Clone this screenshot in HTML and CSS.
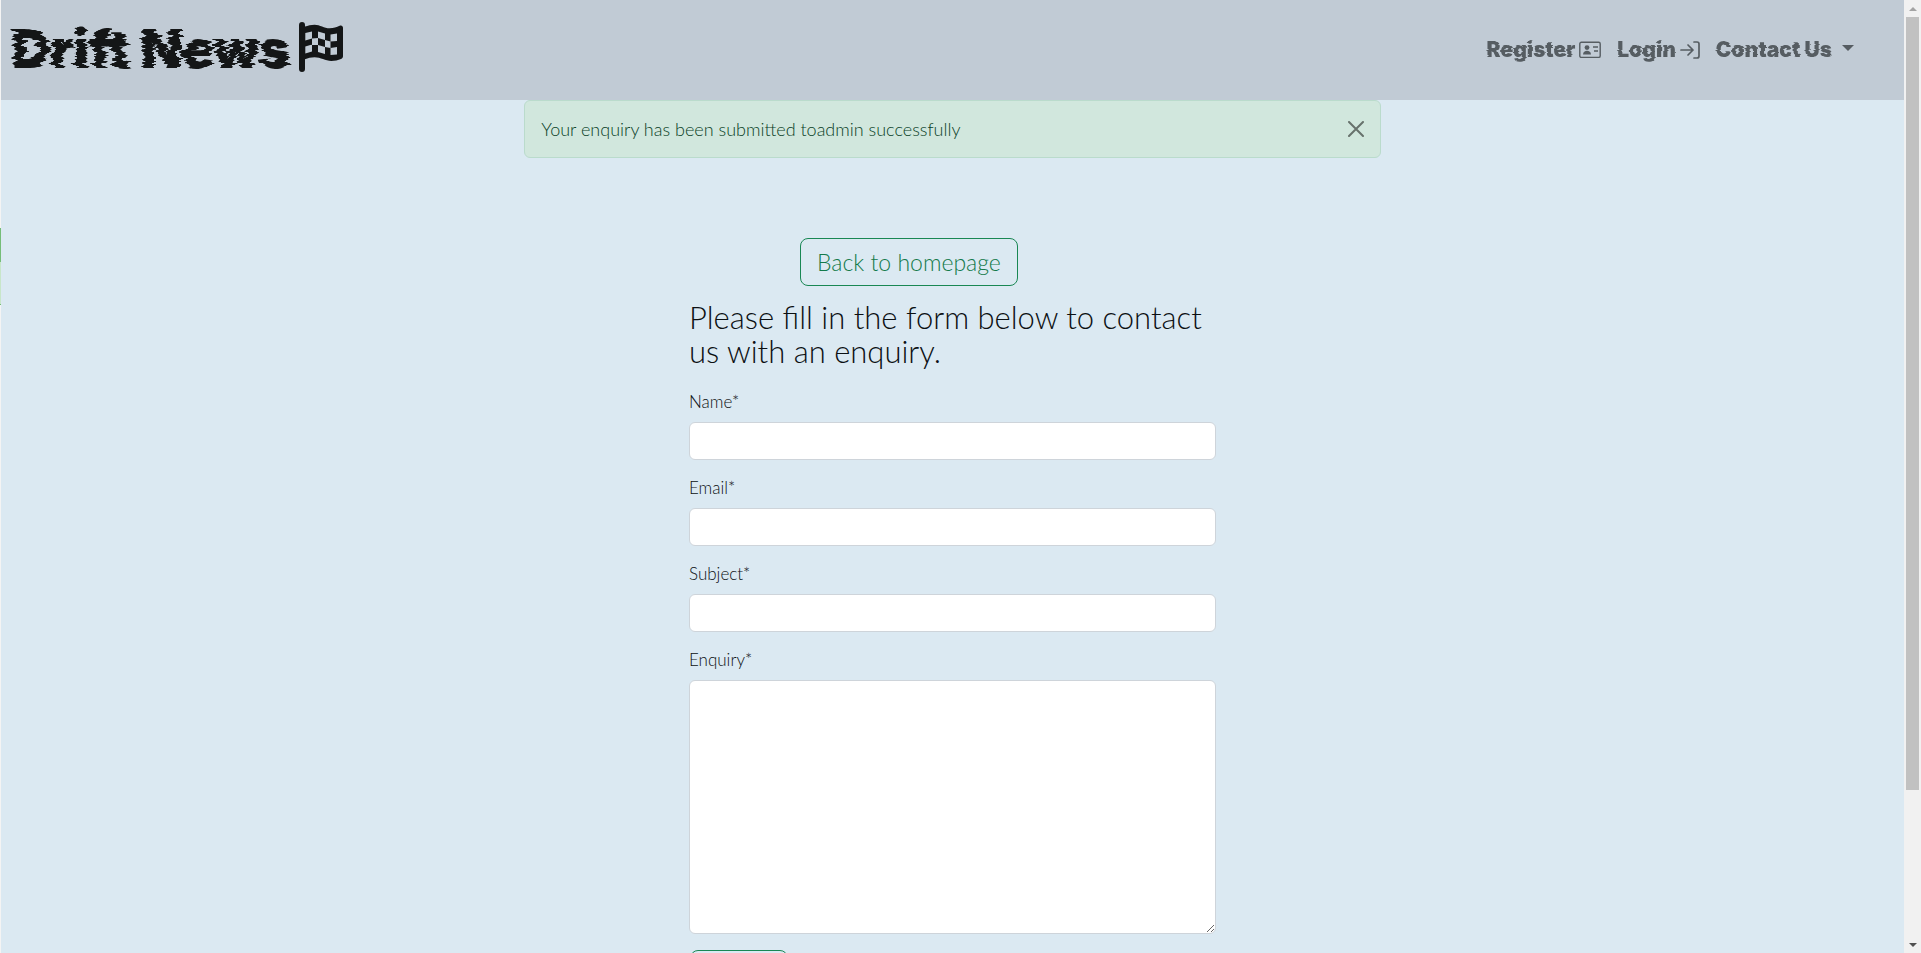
FILE: index.html
```html
<!DOCTYPE html>
<html lang="en">
<head>
<meta charset="utf-8">
<title>Drift News</title>
<link rel="stylesheet" href="styles.css">
</head>
<body>
<svg class="defs" aria-hidden="true">
  <filter id="glitch-lg" x="-5%" y="0" width="110%" height="100%" color-interpolation-filters="sRGB">
    <feTurbulence type="fractalNoise" baseFrequency="0.014 0.32" numOctaves="2" seed="11"/>
    <feColorMatrix type="matrix" values="1 0 0 0 0  0 0 0 0 0.5  0 0 0 0 0.5  0 0 0 0 1" result="h"/>
    <feDisplacementMap in="SourceGraphic" in2="h" scale="15" xChannelSelector="R" yChannelSelector="G"/>
  </filter>
  <filter id="glitch-sm" x="-5%" y="0" width="110%" height="100%" color-interpolation-filters="sRGB">
    <feTurbulence type="fractalNoise" baseFrequency="0.03 0.45" numOctaves="2" seed="7"/>
    <feColorMatrix type="matrix" values="1 0 0 0 0  0 0 0 0 0.5  0 0 0 0 0.5  0 0 0 0 1" result="h"/>
    <feDisplacementMap in="SourceGraphic" in2="h" scale="4" xChannelSelector="R" yChannelSelector="G"/>
  </filter>
</svg>
<div class="shell">
  <div class="edge"><span class="edge-head"></span><span class="edge-body"></span><span class="edge-foot"></span></div>
  <div class="page">
    <header class="navbar">
      <a class="brand" href="#"><span class="brand-name">Drift News</span><svg class="flag" viewBox="0 0 44 50" fill="currentColor" aria-hidden="true"><path fill-rule="evenodd" d="M0 3a3 3 0 0 1 6 0v1.600C9 3.500 12 2.700 15.600 2.700c5.500 0 9.500 3.600 15 3.600 4 0 7-1 10-2.500 1.800-.9 3.400.2 3.400 2V34c0 1.500-.5 2.300-2 3-3 1.300-6 2-9.700 2-6 0-10.500-3.700-16.700-3.700-3.600 0-6.600.9-9.600 2V47a3 3 0 0 1-6 0zM6.300 11L13 9.500v7l-6.700 2zM6.300 24.500L13 22.500v7l-6.700 2zM13 16.500l6-.5v7h-6zM19 9.500l7 2V18l-7-2zM19 23l7 2v7l-7-2zM26 18l5.500 1.500V26L26 25zM31.500 12.500l6.500-1V19l-6.500.5zM31.500 26l6.500-1v7.500l-6.500.5z"/></svg></a>
      <nav class="links">
        <a href="#"><span class="glitch">Register</span><svg width="22" height="18" viewBox="0 0 22 18" fill="none" stroke="currentColor" stroke-width="1.4" aria-hidden="true"><rect x=".8" y="1.2" width="20.4" height="15.2" rx="1.5"/><path d="M14 6h5M15 10h4"/><circle cx="8" cy="6.6" r="2.4" fill="currentColor" stroke="none"/><path d="M4 13.600c0-5 8-5 8 0z" fill="currentColor" stroke="none"/></svg></a>
        <a href="#"><span class="glitch">Login</span><svg width="20" height="18" viewBox="0 0 20 18" fill="none" stroke="currentColor" stroke-width="1.7" stroke-linecap="round" stroke-linejoin="round" aria-hidden="true"><path d="M1 9h12M8 4l5 5-5 5M14 1h3q2 0 2 2v12q0 2-2 2h-3"/></svg></a>
        <a href="#"><span class="glitch">Contact Us</span><span class="caret"></span></a>
      </nav>
    </header>
    <div class="alert" role="alert">
      <span>Your enquiry has been submitted toadmin successfully</span>
      <button class="close" type="button" aria-label="Close"><svg width="16" height="16" viewBox="0 0 16 16" stroke="currentColor" stroke-width="2" stroke-linecap="round" aria-hidden="true"><path d="M1 1l14 14M15 1L1 15"/></svg></button>
    </div>
    <main class="contact">
      <a class="btn btn-lg" href="#">Back to homepage</a>
      <h1>Please fill in the form below to contact us with an enquiry.</h1>
      <form>
        <div class="field"><label for="name">Name*</label><input id="name" type="text"></div>
        <div class="field"><label for="email">Email*</label><input id="email" type="email"></div>
        <div class="field"><label for="subject">Subject*</label><input id="subject" type="text"></div>
        <div class="field"><label for="enquiry">Enquiry*</label><textarea id="enquiry" rows="10"></textarea></div>
        <button class="btn submit" type="submit">Submit</button>
      </form>
    </main>
  </div>
  <div class="scrollbar" aria-hidden="true"><span class="arrow up"></span><span class="thumb"></span><span class="arrow down"></span></div>
</div>
</body>
</html>
```
FILE: styles.css
```css
* { box-sizing: border-box; }
body { margin: 0; font: 300 17px/24px Lato, "Open Sans", sans-serif; color: #0c1013; }
.defs { position: absolute; width: 0; height: 0; }
.shell { display: flex; height: 100vh; overflow: hidden; }
.edge { width: 1px; background: #f4f4f4; display: flex; flex-direction: column; padding-top: 228px; }
.edge-head { height: 34px; background: #75bd78; }
.edge-body { height: 42px; background: #c8e6c9; }
.edge-foot { height: 1px; background: #75bd78; }
.page { flex: 1; overflow: hidden; background: #dbe9f2; }
.navbar { height: 100px; background: #c1cbd5; display: flex; align-items: center; justify-content: space-between; padding: 0 50px 0 11px; }
.brand { display: flex; align-items: center; gap: 8px; padding-bottom: 6px; color: #141617; text-decoration: none; }
.brand-name { padding-top: 3px; font: 900 53px/60px Inter, sans-serif; filter: url(#glitch-lg); }
.flag { width: 44px; height: 50px; }
.links { display: flex; gap: 16px; }
.links a { display: flex; align-items: center; gap: 4px; color: #565d62; text-decoration: none; font: 900 21px/30px Inter, sans-serif; }
.glitch { filter: url(#glitch-sm); }
.caret { margin: 0 0 4px 6px; border: 6px solid transparent; border-top-color: currentColor; border-bottom: 0; }
.alert { width: 45%; margin: 0 auto; min-height: 58px; display: flex; align-items: center; justify-content: space-between; padding: 0 16px; border: 1px solid #badbcc; border-radius: 6px; background: #d1e7dd; color: #0a3f27; font-size: 18px; }
.close { display: flex; padding: 0; border: 0; background: none; color: #67726c; }
.contact { width: 527px; max-width: 100%; margin: 80px auto 0; }
.btn { display: inline-block; border: 1px solid #198754; border-radius: 8px; background: none; color: #137a4a; text-decoration: none; font: 300 17px/24px Lato, sans-serif; }
.btn-lg { margin-left: 111px; padding: 8px 16px; font-size: 23px; line-height: 30px; }
h1 { margin: 14px 0 22px; font-size: 31px; font-weight: 300; line-height: 34px; }
.field { margin-bottom: 16px; }
label { display: block; margin-bottom: 8px; }
input, textarea { display: block; width: 100%; height: 38px; padding: 6px 12px; border: 1px solid #ced4da; border-radius: 6px; background: #fff; font: inherit; }
textarea { height: 254px; resize: vertical; }
.submit { margin-left: 1px; width: 98px; height: 38px; }
.scrollbar { width: 17px; background: #f1f1f1; display: flex; flex-direction: column; align-items: center; }
.thumb { width: 13px; height: 773px; background: #c1c1c1; }
.arrow { border: 4px solid transparent; }
.up { border-bottom-color: #a3a3a3; border-top: 0; margin: 7px 0 6px; }
.down { border-top-color: #505050; border-bottom: 0; margin: auto 0 6px; }
```
